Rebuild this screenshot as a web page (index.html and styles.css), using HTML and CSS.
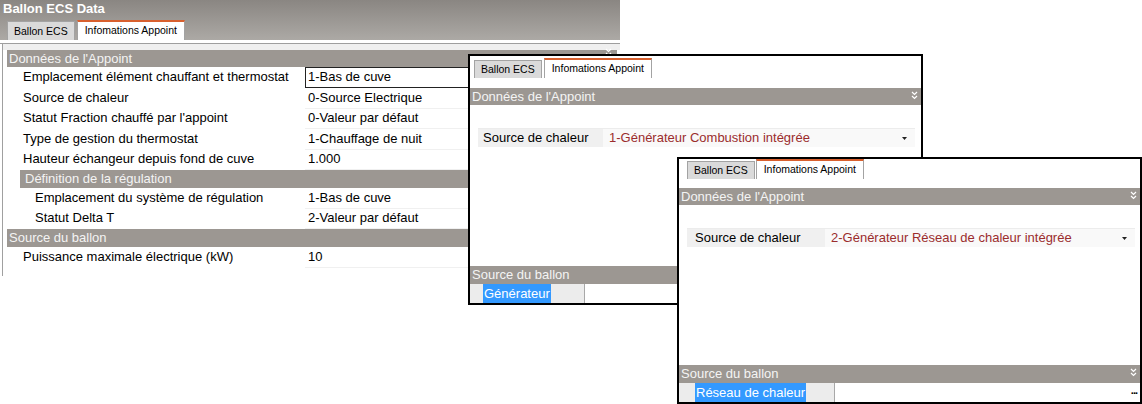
FILE: index.html
```html
<!DOCTYPE html>
<html lang="fr">
<head>
<meta charset="utf-8">
<title>Ballon ECS Data</title>
<link rel="stylesheet" href="styles.css">
</head>
<body>
<div class="desktop">

  <div class="win win-main">
    <div class="titlebar">
      <div class="title">Ballon ECS Data</div>
      <div class="tabs tabs-main">
        <div class="tab">Ballon ECS</div>
        <div class="tab active">Infomations Appoint</div>
      </div>
    </div>
    <div class="sep"></div>
    <div class="panel">
      <div class="band"></div>
      <div class="section sec-main">
        <span>Données de l'Appoint</span>
        <svg class="chev chev-main" width="7" height="9" viewBox="0 0 7 9"><path d="M1 1l2.5 2.5L6 1M1 5l2.5 2.5L6 5" stroke="#fff" fill="none" stroke-width="1.2"/></svg>
      </div>
      <div class="row"><div class="lbl">Emplacement élément chauffant et thermostat</div><div class="val edit">1-Bas de cuve</div></div>
      <div class="row"><div class="lbl">Source de chaleur</div><div class="val">0-Source Electrique</div></div>
      <div class="row"><div class="lbl">Statut Fraction chauffé par l'appoint</div><div class="val">0-Valeur par défaut</div></div>
      <div class="row"><div class="lbl">Type de gestion du thermostat</div><div class="val">1-Chauffage de nuit</div></div>
      <div class="row"><div class="lbl">Hauteur échangeur depuis fond de cuve</div><div class="val">1.000</div></div>
      <div class="section sec-main sec-tall sub">Définition de la régulation</div>
      <div class="row"><div class="lbl lbl-sub">Emplacement du système de régulation</div><div class="val">1-Bas de cuve</div></div>
      <div class="row"><div class="lbl lbl-sub">Statut Delta T</div><div class="val">2-Valeur par défaut</div></div>
      <div class="section sec-main sec-tall">Source du ballon</div>
      <div class="row"><div class="lbl">Puissance maximale électrique (kW)</div><div class="val">10</div></div>
    </div>
  </div>

  <div class="win win-b">
    <div class="tabs tabs-b">
      <div class="tab">Ballon ECS</div>
      <div class="tab active">Infomations Appoint</div>
    </div>
    <div class="section sec-top-b">
      <span>Données de l'Appoint</span>
      <svg class="chev" width="7" height="9" viewBox="0 0 7 9"><path d="M1 1l2.5 2.5L6 1M1 5l2.5 2.5L6 5" stroke="#fff" fill="none" stroke-width="1.2"/></svg>
    </div>
    <div class="prop prop-b">
      <div class="plbl">Source de chaleur</div>
      <div class="pval">1-Générateur Combustion intégrée</div>
      <svg class="drop" width="5" height="3" viewBox="0 0 5 3"><path d="M0 0h5L2.5 3z" fill="#222"/></svg>
    </div>
    <div class="spacer"></div>
    <div class="section sec-bottom">Source du ballon</div>
    <div class="listrow">
      <div class="cell cell-b"><span class="sel">Générateur</span></div>
    </div>
  </div>

  <div class="win win-c">
    <div class="tabs tabs-c">
      <div class="tab">Ballon ECS</div>
      <div class="tab active">Infomations Appoint</div>
    </div>
    <div class="section sec-top-c">
      <span>Données de l'Appoint</span>
      <svg class="chev" width="7" height="9" viewBox="0 0 7 9"><path d="M1 1l2.5 2.5L6 1M1 5l2.5 2.5L6 5" stroke="#fff" fill="none" stroke-width="1.2"/></svg>
    </div>
    <div class="prop prop-c">
      <div class="plbl">Source de chaleur</div>
      <div class="pval">2-Générateur Réseau de chaleur intégrée</div>
      <svg class="drop" width="5" height="3" viewBox="0 0 5 3"><path d="M0 0h5L2.5 3z" fill="#222"/></svg>
    </div>
    <div class="spacer"></div>
    <div class="section sec-bottom">
      <span>Source du ballon</span>
      <svg class="chev" width="7" height="9" viewBox="0 0 7 9"><path d="M1 1l2.5 2.5L6 1M1 5l2.5 2.5L6 5" stroke="#fff" fill="none" stroke-width="1.2"/></svg>
    </div>
    <div class="listrow">
      <div class="cell cell-c"><span class="sel">Réseau de chaleur</span></div>
      <span class="dots">...</span>
    </div>
  </div>

</div>
</body>
</html>
```
FILE: styles.css
```css
* { box-sizing: border-box; margin: 0; padding: 0; }

body {
  margin: 0;
  background: #fff;
  font-family: "Liberation Sans", Arial, sans-serif;
  font-size: 13px;
  color: #000;
}

.desktop {
  position: relative;
  width: 1142px;
  height: 404px;
  overflow: hidden;
  background: #fff;
}

.win {
  position: absolute;
  background: #fff;
  display: flex;
  flex-direction: column;
  overflow: hidden;
}

.win-main { left: 0; top: 0; width: 620px; height: 276px; z-index: 1; }
.win-b { left: 468px; top: 54px; width: 455px; height: 251px; border: 2px solid #000; z-index: 2; }
.win-c { left: 677px; top: 157px; width: 465px; height: 247px; border: 2px solid #000; z-index: 3; }

/* title bar */
.titlebar {
  height: 40px;
  background: linear-gradient(#8a8682, #aca9a5);
  display: flex;
  flex-direction: column;
}

.title {
  height: 20px;
  color: #fff;
  font-weight: bold;
  font-size: 13px;
  line-height: 15px;
  padding: 1px 0 0 3px;
}

/* tabs */
.tabs { display: flex; align-items: flex-end; gap: 2px; }
.tabs-main { height: 20px; padding-left: 7px; }
.tabs-b { height: 22px; padding-left: 4px; gap: 2px; }
.tabs-c { height: 20px; padding-left: 8px; gap: 1px; }

.tab {
  font-size: 10.5px;
  height: 19px;
  line-height: 18px;
  padding: 0 6px;
  background: #dadada;
  border: 1px solid #a3a3a3;
  border-bottom: none;
  white-space: nowrap;
}

.tab.active {
  height: 20px;
  background: #fff;
  border-top: 2px solid #d8602e;
  line-height: 17px;
  padding: 0 7px;
}

.tabs-b .tab, .tabs-c .tab { height: 18px; line-height: 17px; }
.tabs-b .tab.active, .tabs-c .tab.active { height: 20px; line-height: 17px; }

.sep {
  height: 4px;
  background: #fff;
  border-bottom: 1px solid #9e9e9e;
}

/* main panel */
.panel {
  flex: 1;
  margin-left: 2px;
  border-left: 1px solid #a0a0a0;
  background: #fff;
  display: flex;
  flex-direction: column;
}

.band { height: 6px; background: #efefef; flex-shrink: 0; }

.section {
  height: 17px;
  line-height: 17px;
  background: #9c9792;
  color: #f4f4f4;
  font-size: 13px;
  padding-left: 2px;
  display: flex;
  justify-content: space-between;
  align-items: flex-start;
  white-space: nowrap;
  flex-shrink: 0;
}

.sec-main { margin: 0 3px 0 4px; }
.sec-tall { height: 18px; line-height: 18px; }
.sec-main.sub { margin-left: 17px; padding-left: 5px; }

.chev { margin: 3px 3px 0 0; flex-shrink: 0; }
.chev-main { margin-top: -2px; margin-right: 5px; }

.row {
  display: grid;
  grid-template-columns: 302px 1fr;
  height: 20.5px;
  line-height: 20px;
  flex-shrink: 0;
}

.lbl { padding-left: 20px; white-space: nowrap; }
.lbl-sub { padding-left: 32px; }

.val {
  padding-left: 3px;
  white-space: nowrap;
  border-bottom: 1px solid #f0f0f0;
}

.val.edit {
  border: 1px solid #222;
  line-height: 18px;
  padding-left: 2px;
}

/* secondary windows */
.sec-top-b { margin-top: 10px; }
.sec-top-c { margin-top: 9px; }
.sec-bottom { height: 18px; line-height: 18px; }

.prop {
  display: flex;
  align-items: center;
  height: 19px;
  margin-top: 23px;
  background: #f9f9f9;
  border-top: 1px solid #ececec;
  white-space: nowrap;
  flex-shrink: 0;
}

.prop-b { margin-left: 8px; margin-right: 6px; }
.prop-c { margin-left: 8px; margin-right: 5px; }

.plbl {
  height: 100%;
  line-height: 18px;
  background: #f0f0f0;
  padding-left: 5px;
}

.prop-b .plbl { width: 125px; }
.prop-c .plbl { width: 138px; padding-left: 8px; }

.pval {
  flex: 1;
  padding-left: 6px;
  line-height: 18px;
  color: #9b2d2d;
}

.drop { margin-right: 8px; }

.spacer { flex: 1; }

.listrow {
  height: 19px;
  display: flex;
  align-items: stretch;
  flex-shrink: 0;
}

.cell {
  background: #ececec;
  border-right: 1px solid #a8a8a8;
  display: flex;
}

.cell-b { width: 115px; padding-left: 13px; }
.cell-c { width: 156px; padding-left: 16px; }

.sel {
  background: #3399ff;
  color: #fff;
  line-height: 19px;
  padding: 0 1px;
  white-space: nowrap;
}

.dots {
  margin-left: auto;
  margin-right: 3px;
  font-size: 11px;
  font-weight: bold;
  line-height: 15px;
  letter-spacing: -1px;
}
```
